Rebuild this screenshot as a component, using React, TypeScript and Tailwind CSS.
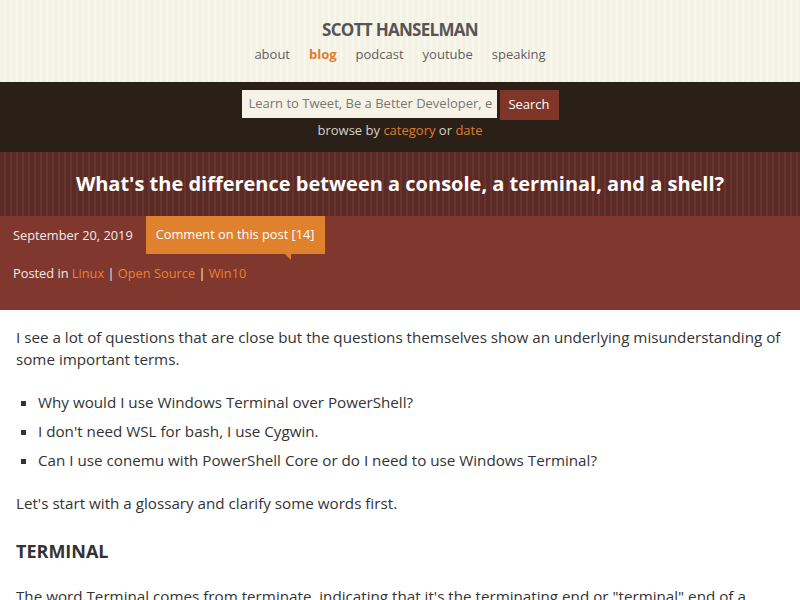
const font = "font-['Open_Sans','Liberation_Sans',sans-serif]"

function Header() {
  return (
    <header className="flex h-[82px] flex-col items-center bg-[#f4f2e5] bg-[repeating-linear-gradient(90deg,#f4f2e5_0px,#f4f2e5_4px,#f8f7ee_4px,#f8f7ee_6px)] pt-[19px]">
      <h1 className="text-[17px] font-bold leading-[22px] tracking-[-0.7px] text-[#555555]">SCOTT HANSELMAN</h1>
      <nav className="mt-[2px] flex gap-[19px] text-[13px] leading-[22px] text-[#5f5f5f]">
        <a>about</a>
        <a className="font-bold text-[#e07b2e]">blog</a>
        <a>podcast</a>
        <a>youtube</a>
        <a>speaking</a>
      </nav>
    </header>
  )
}

function SearchBar() {
  return (
    <div className="flex h-[70px] flex-col items-center bg-[#2a2017] pt-[8px]">
      <div className="flex gap-[3px]">
        <div className="flex h-[28px] w-[255px] items-center overflow-hidden whitespace-nowrap bg-[#f6f3e6] px-[7px] text-[13px] text-[#777777]">
          Learn to Tweet, Be a Better Developer, e
        </div>
        <button className="h-[30px] w-[59px] bg-[#7f3528] text-[13px] text-white">Search</button>
      </div>
      <p className="text-[13px] leading-[20px] text-[#d6d2c6]">
        browse by <a className="text-[#e07b2e]">category</a> or <a className="text-[#e07b2e]">date</a>
      </p>
    </div>
  )
}

function PostHeader() {
  return (
    <>
      <div className="flex h-[64px] items-center justify-center bg-[#5d2b26] bg-[repeating-linear-gradient(90deg,#5c2a25_0px,#5c2a25_4px,#673430_4px,#673430_6px)]">
        <h2 className="text-[20px] font-bold text-white">What's the difference between a console, a terminal, and a shell?</h2>
      </div>
      <div className="h-[94px] bg-[#80372d]">
        <div className="flex items-start">
          <span className="px-[13px] pt-[11px] text-[12.8px] leading-[17px] text-[#f3ece6]">September 20, 2019</span>
          <div className="relative flex h-[38px] items-center bg-[#e0812d] px-[10px] text-[12.8px] text-white">
            Comment on this post [14]
            <span className="absolute right-[34px] top-[38px] h-0 w-0 border-l-[6px] border-t-[6px] border-l-transparent border-t-[#e0812d]" />
          </div>
        </div>
        <p className="px-[13px] pt-[9px] text-[12.8px] leading-[20px] text-[#f3ece6]">
          Posted in <a className="text-[#e88333]">Linux</a> | <a className="text-[#e88333]">Open Source</a> |{' '}
          <a className="text-[#e88333]">Win10</a>
        </p>
      </div>
    </>
  )
}

function Article() {
  return (
    <article className="px-[16px] pt-[16px] text-[15.2px] leading-[22px] text-[#333333]">
      <p>
        I see a lot of questions that are close but the questions themselves show an underlying misunderstanding of some
        important terms.
      </p>
      <ul className="mt-[21px] flex list-[square] flex-col gap-[7px] pl-[22px]">
        <li>Why would I use Windows Terminal over PowerShell?</li>
        <li>I don't need WSL for bash, I use Cygwin.</li>
        <li>Can I use conemu with PowerShell Core or do I need to use Windows Terminal?</li>
      </ul>
      <p className="mt-[21px]">Let's start with a glossary and clarify some words first.</p>
      <h3 className="mt-[25px] text-[18px] font-bold leading-[24px]">TERMINAL</h3>
      <p className="mt-[22px]">
        The word Terminal comes from terminate, indicating that it's the terminating end or "terminal" end of a
        communication process.
      </p>
    </article>
  )
}

export default function App() {
  return (
    <div className={`${font} h-[600px] overflow-hidden bg-white`}>
      <Header />
      <SearchBar />
      <PostHeader />
      <Article />
    </div>
  )
}
